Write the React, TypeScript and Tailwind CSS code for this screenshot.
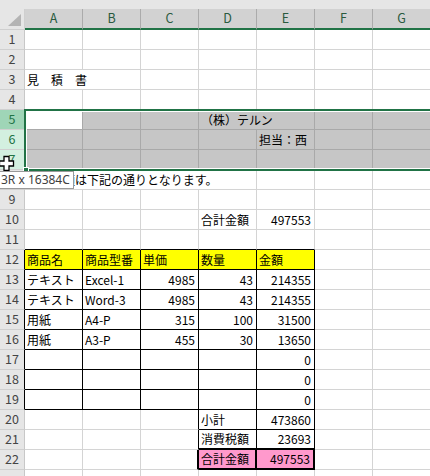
const COLS = ["A", "B", "C", "D", "E", "F", "G"];

// sheet contents, indexed by row number then column (A = 0)
const sheet: Record<number, (string | null)[]> = {
  3: ["見　積　書"],
  5: [null, null, null, "（株）テルン"],
  6: [null, null, null, null, "担当：西"],
  8: ["見積金額は下記の通りとなります。"],
  10: [null, null, null, "合計金額", "497553"],
  12: ["商品名", "商品型番", "単価", "数量", "金額"],
  13: ["テキスト", "Excel-1", "4985", "43", "214355"],
  14: ["テキスト", "Word-3", "4985", "43", "214355"],
  15: ["用紙", "A4-P", "315", "100", "31500"],
  16: ["用紙", "A3-P", "455", "30", "13650"],
  17: [null, null, null, null, "0"],
  18: [null, null, null, null, "0"],
  19: [null, null, null, null, "0"],
  20: [null, null, null, "小計", "473860"],
  21: [null, null, null, "消費税額", "23693"],
  22: [null, null, null, "合計金額", "497553"],
};

const thin = (r: number, c: number) =>
  (r >= 12 && r <= 19 && c >= 0 && c <= 4) || ((r === 20 || r === 21) && (c === 3 || c === 4));
const thick = (r: number, c: number) => r === 22 && (c === 3 || c === 4);
const sel = (r: number) => r >= 5 && r <= 7;

function rightBorder(r: number, c: number) {
  if (thick(r, c) || thick(r, c + 1)) return "border-r-2 border-r-black";
  if (thin(r, c) || thin(r, c + 1)) return "border-r border-r-black";
  if (sel(r)) return "border-r border-r-[#a9a9a9]";
  return "border-r border-r-[#d4d4d4]";
}

function bottomBorder(r: number, c: number) {
  if (thick(r, c) || thick(r + 1, c)) return "border-b-2 border-b-black";
  if (thin(r, c) || thin(r + 1, c)) return "border-b border-b-black";
  if (sel(r)) return "border-b border-b-[#a9a9a9]";
  return "border-b border-b-[#d4d4d4]";
}

function cellBg(r: number, c: number) {
  if (sel(r) && !(r === 5 && c === 0)) return "bg-[#c6c6c6]";
  if (thick(r, c)) return "bg-[#ff99cc]";
  if (r === 12 && c <= 4) return "bg-[#ffff00]";
  return "bg-white";
}

function RowHeader({ r, label }: { r: number; label: boolean }) {
  let look = "bg-[#e6e6e6] text-[#444]";
  if (r === 5) look = "bg-[#9fd5b7] text-[#217346]";
  else if (sel(r)) look = "bg-[#d3f0e0] text-[#217346]";
  const edge = thin(r, 0) ? "border-r-black" : "border-r-[#c8c8c8]";
  return (
    <div
      className={`w-[25px] shrink-0 flex items-center justify-center border-r border-b border-b-[#d0d0d0] text-[12.5px] ${edge} ${look}`}
    >
      {label ? r : null}
    </div>
  );
}

function Row({ r }: { r: number }) {
  const vals = sheet[r] ?? [];
  return (
    <div className="flex h-[20px]">
      {/* last row only peeks in at the bottom edge, its number is out of view */}
      <RowHeader r={r} label={r < 23} />
      {COLS.map((_, c) => {
        const v = vals[c];
        const num = v != null && /^\d+$/.test(v);
        const bg = cellBg(r, c);
        return (
          <div
            key={c}
            className={`w-[58px] shrink-0 flex items-stretch ${num ? "justify-end pr-[3px]" : "pl-[2px]"} ${bg} ${rightBorder(r, c)} ${bottomBorder(r, c)}`}
          >
            {v != null && (
              <span className={`relative z-10 flex items-center whitespace-nowrap text-[12px] text-black ${bg}`}>
                {v}
              </span>
            )}
          </div>
        );
      })}
    </div>
  );
}

export default function App() {
  const rows = Array.from({ length: 23 }, (_, i) => i + 1);
  return (
    <div className="relative w-[430px] h-[476px] overflow-hidden bg-white font-['Noto_Sans_CJK_JP',sans-serif] select-none">
      <div className="h-[9px] bg-[#e6e6e6]" />

      {/* column headers */}
      <div className="flex h-[21px]">
        <div className="w-[25px] shrink-0 bg-[#e6e6e6] border-r border-b border-[#cfcfcf] flex items-end justify-end p-[3px]">
          <svg width="13" height="12" viewBox="0 0 13 12">
            <polygon points="13,0 13,12 0,12" fill="#b4b4b4" />
          </svg>
        </div>
        {COLS.map((l) => (
          <div
            key={l}
            className="w-[58px] shrink-0 bg-[#d2d2d2] border-r border-r-[#ababab] border-b-2 border-b-[#217346] flex items-center justify-center text-[12.5px] text-[#2a5a3e]"
          >
            {l}
          </div>
        ))}
      </div>

      {rows.slice(0, 4).map((r) => (
        <Row key={r} r={r} />
      ))}

      {/* selected rows 5-7 */}
      <div className="relative">
        {rows.slice(4, 7).map((r) => (
          <Row key={r} r={r} />
        ))}
        <div className="absolute z-20 left-[24px] right-[-10px] top-[-1px] bottom-[-1px] border-2 border-[#217346] shadow-[inset_0_0_0_1px_white] pointer-events-none" />
        <div className="absolute z-30 left-[23px] bottom-[-3px] w-[6px] h-[6px] bg-[#217346] border border-white" />
      </div>

      {rows.slice(7).map((r) => (
        <Row key={r} r={r} />
      ))}

      {/* move cursor */}
      <svg className="absolute z-30 left-[-2px] top-[155px]" width="17" height="17" viewBox="0 0 17 17">
        <path
          d="M6 1.5h5v4.5h4.5v5H11v4.5H6V11H1.5V6H6z"
          fill="white"
          stroke="black"
          strokeWidth="1.3"
          strokeLinejoin="miter"
        />
      </svg>

      {/* selection size tooltip */}
      <div className="absolute z-30 left-[-3px] top-[171px] h-[18px] pl-[3px] pr-[3px] bg-white border border-[#9a9a9a] flex items-center font-['Noto_Sans',sans-serif] text-[12px] text-[#404040] whitespace-nowrap">
        3R x 16384C
      </div>
    </div>
  );
}
